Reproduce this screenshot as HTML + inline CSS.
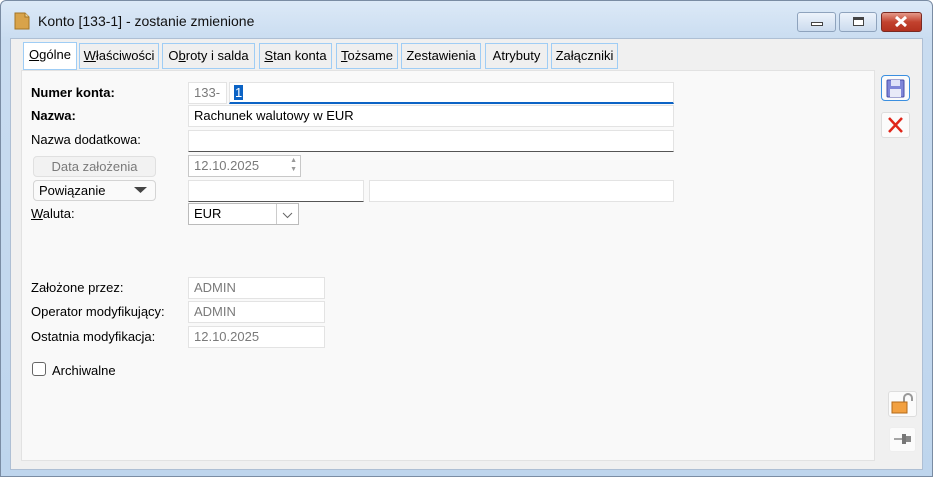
<!DOCTYPE html>
<html><head><meta charset="utf-8"><style>
*{box-sizing:border-box;margin:0;padding:0}
body{width:933px;height:477px;overflow:hidden;font-family:"Liberation Sans",sans-serif;font-size:13px;color:#000;background:#fff}
.frame{position:absolute;left:0;top:0;width:933px;height:477px;background:linear-gradient(#dce9f7,#c9dcf0 40px,#bed5ed);border:1px solid #7a8ca3;border-radius:6px 6px 0 0}
.title{position:absolute;left:38px;top:13px;font-size:14px;color:#111}
.content{position:absolute;left:10px;top:38px;width:913px;height:432px;background:#f0f0f0;border:1px solid #aebfd4}
.panel{position:absolute;left:21px;top:70px;width:854px;height:391px;background:#f9f9f9;border:1px solid #e2e2e2}
.tab{position:absolute;top:43px;height:26px;border:1px solid #9fcdf5;background:#efefef;font-size:13px;line-height:24px;text-align:center}
.tab.act{background:#fff;top:42px;height:28px;border-color:#9fcdf5}
.a{position:absolute;font-size:13px}
.b{font-weight:bold}
.in{position:absolute;background:#fff;border:1px solid #e3e3e3;height:22px;line-height:20px;padding-left:5px;font-size:13px}
.g{color:#7a7a7a}
.btn{position:absolute;border:1px solid #d4d4d4;border-radius:4px;background:#f3f3f3;height:21px;line-height:19px;font-size:13px}
.wb{position:absolute;top:12px;height:20px;border:1px solid #8ea3bd;border-radius:3px;background:linear-gradient(#edf3fb,#cbdbee)}
.ib{position:absolute;border:1px solid #ddd;border-radius:3px;background:#fbfbfb}
</style></head><body>
<div class="frame"></div>
<svg style="position:absolute;left:14px;top:12px" width="16" height="18"><path d="M1 1h10l4 4v12H1z" fill="#d8a34a" stroke="#a47424"/><path d="M11 1v4h4" fill="#f0d79a" stroke="#a47424"/></svg>
<div class="title">Konto [133-1] - zostanie zmienione</div>
<div class="wb" style="left:797px;width:39px"><div style="position:absolute;left:13px;top:9px;width:12px;height:4px;border:1px solid #444;background:#fff"></div></div>
<div class="wb" style="left:839px;width:38px"><div style="position:absolute;left:13px;top:4px;width:11px;height:9px;border:1px solid #444;border-top-width:3px;background:#fff"></div></div>
<div class="wb" style="left:881px;width:41px;background:linear-gradient(#e59a8a,#c2422e 50%,#b3311f);border-color:#7a2a22"><svg width="39" height="18"><path d="M14 4l10 9M24 4l-10 9" stroke="#fff" stroke-width="3"/></svg></div>
<div class="content"></div>
<div class="panel"></div>
<div class="tab act" style="left:23px;width:54px"><u>O</u>gólne</div>
<div class="tab" style="left:79px;width:80px"><u>W</u>łaściwości</div>
<div class="tab" style="left:162px;width:93px">O<u>b</u>roty i salda</div>
<div class="tab" style="left:259px;width:73px"><u>S</u>tan konta</div>
<div class="tab" style="left:336px;width:62px"><u>T</u>ożsame</div>
<div class="tab" style="left:401px;width:80px">Zestawienia</div>
<div class="tab" style="left:485px;width:63px">Atrybuty</div>
<div class="tab" style="left:551px;width:67px">Załączniki</div>

<div class="a b" style="left:31px;top:85px">Numer konta:</div>
<div class="in g" style="left:188px;top:82px;width:39px">133-</div>
<div class="in" style="left:229px;top:82px;width:445px;border-bottom:2px solid #0b63c5;padding-left:4px"><span style="background:#0b63c5;color:#fff;padding:0 1px">1</span></div>
<div class="a b" style="left:31px;top:108px">Nazwa:</div>
<div class="in" style="left:188px;top:105px;width:486px">Rachunek walutowy w EUR</div>
<div class="a" style="left:31px;top:132px">Nazwa dodatkowa:</div>
<div class="in" style="left:188px;top:130px;width:486px;border-bottom:1px solid #555"></div>
<div class="btn g" style="left:33px;top:156px;width:123px;text-align:center;background:#f2f2f2;border-color:#e0e0e0">Data założenia</div>
<div class="in g" style="left:188px;top:155px;width:113px;border-color:#c8c8c8">12.10.2025<span style="position:absolute;right:3px;top:0;font-size:7px;line-height:9px;color:#999">▲<br>▼</span></div>
<div class="btn" style="left:33px;top:180px;width:123px;padding-left:5px;background:#fafafa">Powiązanie<svg style="position:absolute;right:8px;top:6px" width="13" height="6"><path d="M0 0h13L6.5 6z" fill="#444"/></svg></div>
<div class="in" style="left:188px;top:180px;width:176px;border-bottom:1px solid #555"></div>
<div class="in" style="left:369px;top:180px;width:305px"></div>
<div class="a" style="left:31px;top:206px"><u>W</u>aluta:</div>
<div class="in" style="left:188px;top:203px;width:111px;border-color:#bbb">EUR<span style="position:absolute;right:0;top:0;width:22px;height:20px;border-left:1px solid #ccc"><svg width="21" height="20"><path d="M6 9l4.5 4.5L15 9" fill="none" stroke="#666"/></svg></span></div>

<div class="a" style="left:31px;top:280px">Założone przez:</div>
<div class="in g" style="left:188px;top:277px;width:137px">ADMIN</div>
<div class="a" style="left:31px;top:304px">Operator modyfikujący:</div>
<div class="in g" style="left:188px;top:301px;width:137px">ADMIN</div>
<div class="a" style="left:31px;top:329px">Ostatnia modyfikacja:</div>
<div class="in g" style="left:188px;top:326px;width:137px">12.10.2025</div>
<div style="position:absolute;left:32px;top:362px;width:14px;height:14px;border:1px solid #666;border-radius:3px;background:#fff"></div>
<div class="a" style="left:52px;top:363px">Archiwalne</div>

<div class="ib" style="left:881px;top:75px;width:29px;height:26px;border:1px solid #3b8fe0;border-radius:4px"><svg width="27" height="24"><rect x="5" y="4" width="17" height="17" rx="1" fill="#7f86d8" stroke="#4a4fa8"/><rect x="9" y="4" width="9" height="6" fill="#dfe2f8"/><rect x="8" y="13" width="11" height="8" fill="#e8eaf8"/></svg></div>
<div class="ib" style="left:881px;top:112px;width:29px;height:26px"><svg width="27" height="24"><path d="M7 5l13 14M20 5L7 19" stroke="#e0261a" stroke-width="2.5"/></svg></div>
<div class="ib" style="left:888px;top:391px;width:29px;height:26px"><svg width="27" height="24"><path d="M15 10V6a4 4 0 0 1 8 0v3" fill="none" stroke="#999" stroke-width="2"/><rect x="3" y="10" width="15" height="11" fill="#f2a040" stroke="#b36a1a"/></svg></div>
<div class="ib" style="left:889px;top:427px;width:27px;height:25px;border-color:#eee"><svg width="25" height="23"><path d="M4 11h8" stroke="#888" stroke-width="1.5"/><rect x="12" y="6" width="4" height="10" fill="#777"/><rect x="16" y="8" width="5" height="6" fill="#888"/></svg></div>
</body></html>
